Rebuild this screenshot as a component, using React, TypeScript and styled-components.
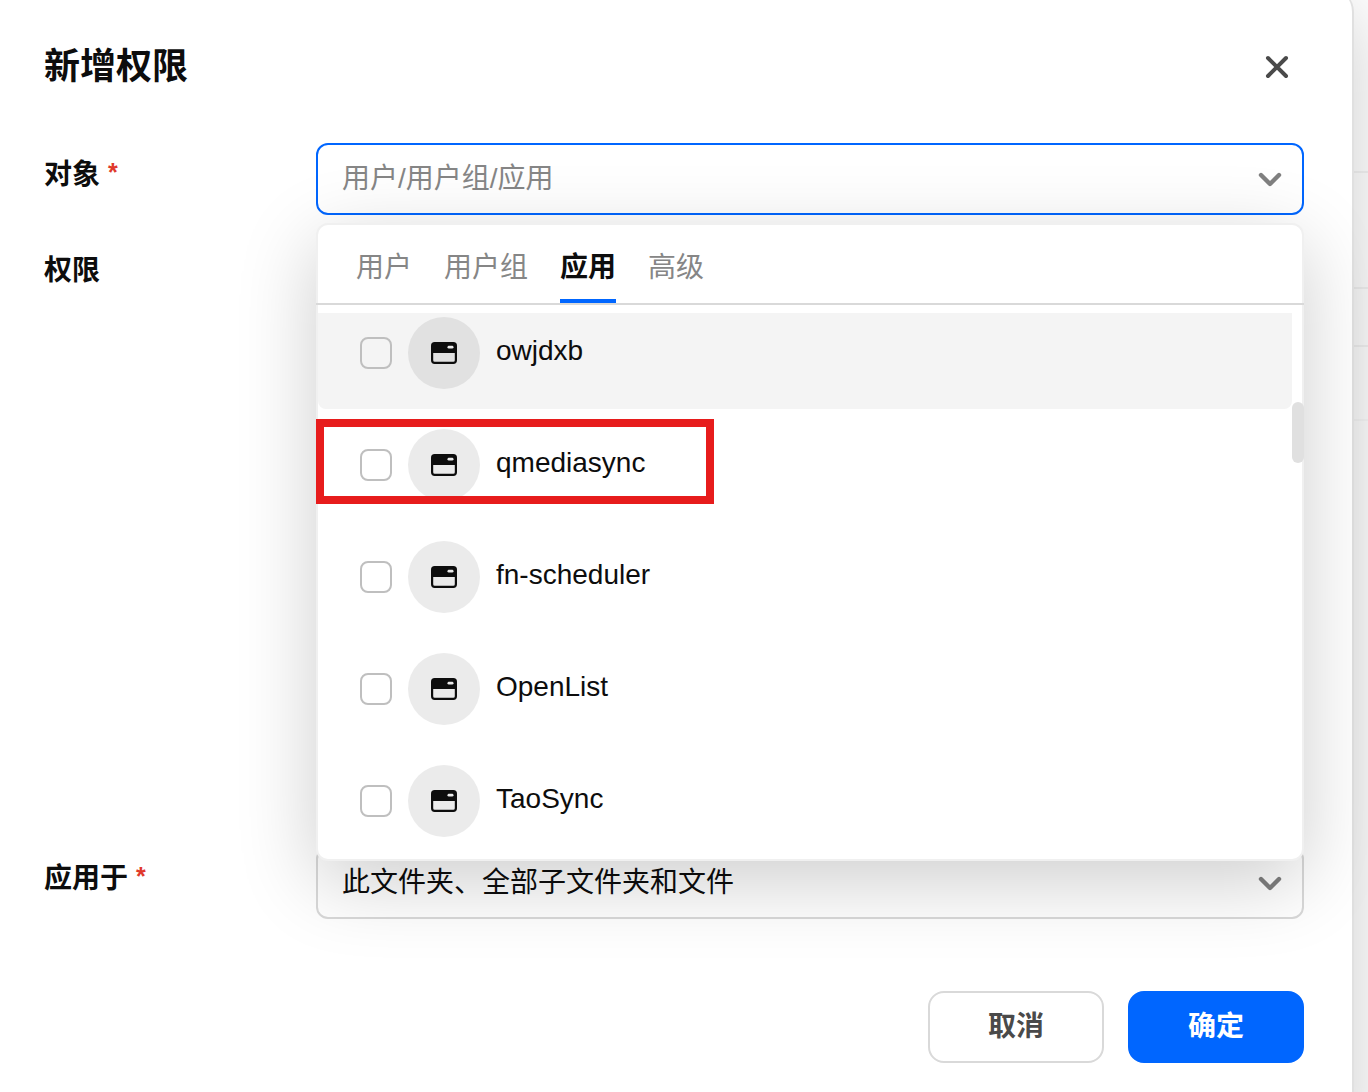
import React from "react";
import styled, { createGlobalStyle } from "styled-components";

const GlobalStyle = createGlobalStyle`
  *, *::before, *::after { box-sizing: border-box; }
  body {
    margin: 0;
    overflow: hidden;
    font-family: "Liberation Sans", "Noto Sans CJK SC", sans-serif;
    font-size: 28px;
    line-height: 44px;
    color: #0d0d0d;
    background: #fff;
  }
`;

const Page = styled.div`
  display: flex;
  width: 1368px;
  height: 1092px;
  overflow: hidden;
  background: #fff;
`;

const Dialog = styled.section`
  position: relative;
  z-index: 1;
  display: flex;
  flex-direction: column;
  flex: none;
  width: 1354px;
  height: 1160px;
  margin-top: -12px;
  padding: 51px 48px 0 44px;
  background: #fff;
  border-right: 2px solid #e0e0e0;
  border-top-right-radius: 24px;
  box-shadow: 0 20px 80px rgba(0, 0, 0, 0.2);
`;

const Behind = styled.aside`
  flex: 1;
  display: flex;
  flex-direction: column;
`;

const BehindRow = styled.div<{ $height: number }>`
  flex: none;
  height: ${(p) => p.$height}px;
  border-bottom: 2px solid #f3f3f3;

  &:last-child {
    border-bottom-color: #f9f9f9;
  }
`;

const Header = styled.header`
  display: flex;
  align-items: center;
  justify-content: space-between;
  height: 56px;
  margin-bottom: 48px;
`;

const Title = styled.h1`
  margin: 0;
  font-size: 36px;
  line-height: 56px;
  font-weight: 600;
`;

const CloseButton = styled.button`
  display: flex;
  align-items: center;
  justify-content: center;
  width: 56px;
  height: 56px;
  padding: 0;
  margin-right: -1px;
  border: 0;
  background: none;
  color: #4a4a4a;
`;

const Form = styled.div`
  display: grid;
  grid-template-rows: 72px 584px 72px;
  row-gap: 24px;
`;

const Field = styled.div`
  position: relative;
  display: grid;
  grid-template-columns: 272px 988px;
`;

const Label = styled.label`
  display: flex;
  align-items: flex-start;
  padding-top: 10px;
  font-weight: 600;
`;

const Required = styled.span`
  margin: -3px 0 0 8px;
  font-size: 25px;
  font-weight: 700;
  color: #e0392b;
`;

const Select = styled.div<{ $active?: boolean }>`
  display: flex;
  align-items: center;
  justify-content: space-between;
  height: 72px;
  padding: 0 20px 0 24px;
  border: 2px solid ${(p) => (p.$active ? "#0066ff" : "#d9d9d9")};
  border-radius: 12px;
  color: ${(p) => (p.$active ? "#868686" : "#0d0d0d")};
`;

const Chevron = styled.svg`
  width: 24px;
  height: 16px;
  margin-bottom: 1px;
  fill: none;
  stroke: #808080;
  stroke-width: 4.4;
  stroke-linecap: round;
  stroke-linejoin: round;
`;

const Dropdown = styled.div`
  position: absolute;
  z-index: 2;
  top: 80px;
  left: 272px;
  width: 988px;
  height: 638px;
  border: 2px solid #f0f0f0;
  border-radius: 12px;
  background: #fff;
  box-shadow: 0 20px 80px rgba(0, 0, 0, 0.2);
`;

const Tabs = styled.nav`
  display: flex;
  gap: 32px;
  height: 80px;
  margin: 0 -2px;
  padding: 0 40px;
  border-bottom: 2px solid #d9d9d9;
`;

const Tab = styled.span<{ $selected?: boolean }>`
  height: 78px;
  padding-top: 21px;
  font-weight: ${(p) => (p.$selected ? 700 : 400)};
  color: ${(p) => (p.$selected ? "#0d0d0d" : "#868686")};
  border-bottom: 4px solid ${(p) => (p.$selected ? "#0066ff" : "transparent")};
`;

const ListArea = styled.div`
  display: flex;
  justify-content: space-between;
  height: 546px;
  margin: 8px -2px 0 0;
  overflow: hidden;
`;

const List = styled.div`
  width: 974px;
  margin-top: -16px;
`;

const Option = styled.div<{ $hovered?: boolean }>`
  display: flex;
  align-items: center;
  gap: 16px;
  height: 112px;
  padding-left: 42px;
  border-radius: 8px;
  background: ${(p) => (p.$hovered ? "#f4f4f4" : "transparent")};
`;

const Checkbox = styled.span`
  width: 32px;
  height: 32px;
  border: 2px solid #bfbfbf;
  border-radius: 8px;
`;

const Avatar = styled.span<{ $hovered?: boolean }>`
  display: flex;
  align-items: center;
  justify-content: center;
  width: 72px;
  height: 72px;
  border-radius: 50%;
  background: ${(p) => (p.$hovered ? "#e1e1e1" : "#ebebeb")};
`;

const OptionName = styled.span`
  padding-bottom: 4px;
`;

const ScrollThumb = styled.div`
  width: 12px;
  height: 61px;
  margin-top: 89px;
  border-radius: 6px;
  background: #e0e0e0;
`;

const Highlight = styled.div`
  position: absolute;
  top: 194px;
  left: -2px;
  width: 398px;
  height: 85px;
  border: 8px solid #e71c1c;
`;

const Footer = styled.footer`
  display: flex;
  justify-content: flex-end;
  gap: 24px;
  margin-top: 72px;
`;

const Button = styled.button<{ $primary?: boolean }>`
  width: 176px;
  height: 72px;
  padding: 0;
  border: 2px solid ${(p) => (p.$primary ? "#0066ff" : "#d9d9d9")};
  border-radius: 16px;
  background: ${(p) => (p.$primary ? "#0066ff" : "#fff")};
  color: ${(p) => (p.$primary ? "#fff" : "#4a4a4a")};
  font-family: inherit;
  font-size: 28px;
  line-height: 44px;
  font-weight: 600;
`;

const tabs = ["用户", "用户组", "应用", "高级"];
const apps = ["owjdxb", "qmediasync", "fn-scheduler", "OpenList", "TaoSync"];
const behindRows = [173, 116, 58, 74];

const ChevronDown = () => (
  <Chevron viewBox="0 0 24 16">
    <path d="M3 4l9 9 9-9" />
  </Chevron>
);

const WindowIcon = () => (
  <svg width="26" height="22" viewBox="0 0 26 22">
    <rect x="1.1" y="1.1" width="23.8" height="19.8" rx="2.6" fill="none" stroke="#0d0d0d" strokeWidth="2.2" />
    <path d="M1 11V4a3 3 0 0 1 3-3h18a3 3 0 0 1 3 3v7z" fill="#0d0d0d" />
    <rect x="16.5" y="3.8" width="6" height="2.8" rx="1.4" fill="#ebebeb" />
  </svg>
);

export default function App() {
  return (
    <>
      <GlobalStyle />
      <Page>
        <Dialog>
          <Header>
            <Title>新增权限</Title>
            <CloseButton aria-label="关闭">
              <svg width="24" height="24" viewBox="0 0 24 24" fill="none" stroke="currentColor" strokeWidth="4" strokeLinecap="round">
                <path d="M3 3l18 18M21 3L3 21" />
              </svg>
            </CloseButton>
          </Header>
          <Form>
            <Field>
              <Label>
                对象<Required>*</Required>
              </Label>
              <Select $active>
                <span>用户/用户组/应用</span>
                <ChevronDown />
              </Select>
              <Dropdown>
                <Tabs>
                  {tabs.map((tab) => (
                    <Tab key={tab} $selected={tab === "应用"}>
                      {tab}
                    </Tab>
                  ))}
                </Tabs>
                <ListArea>
                  <List>
                    {apps.map((app, i) => (
                      <Option key={app} $hovered={i === 0}>
                        <Checkbox />
                        <Avatar $hovered={i === 0}>
                          <WindowIcon />
                        </Avatar>
                        <OptionName>{app}</OptionName>
                      </Option>
                    ))}
                  </List>
                  <ScrollThumb />
                </ListArea>
                <Highlight />
              </Dropdown>
            </Field>
            <Field>
              <Label>权限</Label>
            </Field>
            <Field>
              <Label>
                应用于<Required>*</Required>
              </Label>
              <Select>
                <span>此文件夹、全部子文件夹和文件</span>
                <ChevronDown />
              </Select>
            </Field>
          </Form>
          <Footer>
            <Button>取消</Button>
            <Button $primary>确定</Button>
          </Footer>
        </Dialog>
        <Behind>
          {behindRows.map((height, i) => (
            <BehindRow key={i} $height={height} />
          ))}
        </Behind>
      </Page>
    </>
  );
}
